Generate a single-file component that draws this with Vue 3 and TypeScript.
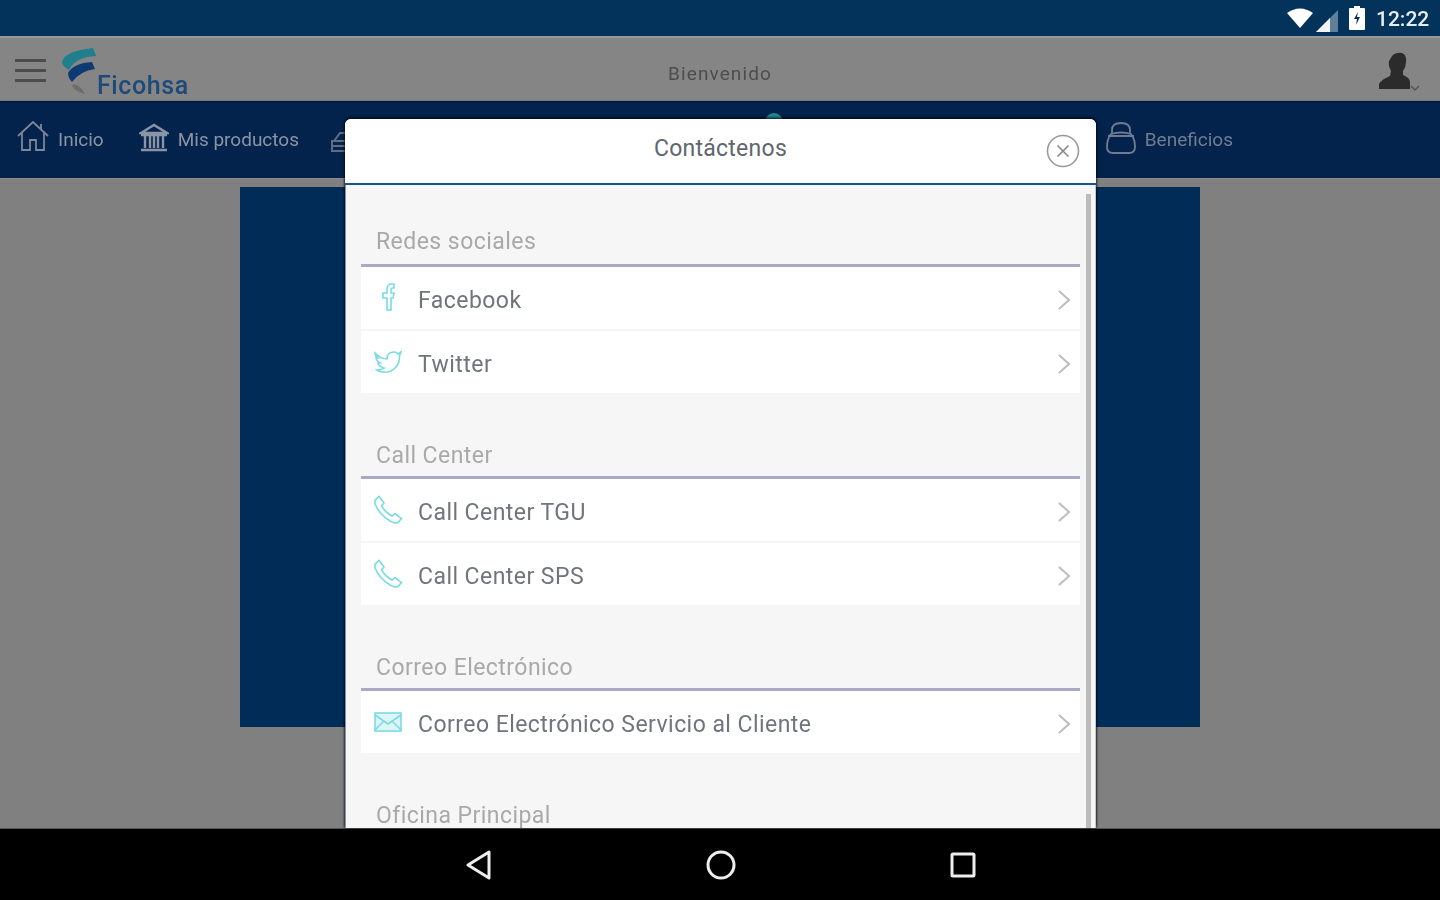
<script setup lang="ts">
interface ContactRow {
  label: string;
  icon: 'facebook' | 'twitter' | 'phone' | 'mail';
}

interface ContactSection {
  title: string;
  rows: ContactRow[];
}

const sections: ContactSection[] = [
  {
    title: 'Redes sociales',
    rows: [
      { label: 'Facebook', icon: 'facebook' },
      { label: 'Twitter', icon: 'twitter' },
    ],
  },
  {
    title: 'Call Center',
    rows: [
      { label: 'Call Center TGU', icon: 'phone' },
      { label: 'Call Center SPS', icon: 'phone' },
    ],
  },
  {
    title: 'Correo Electrónico',
    rows: [{ label: 'Correo Electrónico Servicio al Cliente', icon: 'mail' }],
  },
  { title: 'Oficina Principal', rows: [] },
];
</script>

<template>
  <div class="screen">
    <div class="status-bar">
      <svg class="wifi" width="26" height="20" viewBox="0 0 26 20"><path d="M0 5 Q13 -4 26 5 L13 20 Z" fill="#fff" /></svg>
      <svg class="signal" width="22" height="22" viewBox="0 0 22 22">
        <path d="M22 0 V22 H0 Z" fill="#5d7f9b" />
        <path d="M14 8 V22 H0 Z" fill="#f2f5f7" />
      </svg>
      <svg class="battery" width="16" height="24" viewBox="0 0 16 24">
        <path d="M5 0 H11 V2 H15 Q16 2 16 3 V23 Q16 24 15 24 H1 Q0 24 0 23 V3 Q0 2 1 2 H5 Z" fill="#fff" />
        <path d="M9 6 L5 13 H8 L7 19 L11 11 H8 Z" fill="#03335a" />
      </svg>
      <span class="clock">12:22</span>
    </div>

    <header class="app-header">
      <div class="burger"><i></i><i></i><i></i></div>
      <div class="logo">
        <svg width="40" height="48" viewBox="0 0 40 48">
          <path d="M1 14 Q3 3 32 0 L35 8 Q14 9 8 22 Q1 18 1 14 Z" fill="#1f7f8d" />
          <path d="M7 25 Q13 15 31 14 L34 21 Q19 23 11 34 Q7 30 7 25 Z" fill="#0e3a73" />
          <path d="M13 36 Q19 37 24 46 Q15 44 11 38 Z" fill="#6d6d6d" />
        </svg>
        <span class="logo-text">Ficohsa</span>
      </div>
      <div class="header-title">Bienvenido</div>
      <svg class="user" width="44" height="42" viewBox="0 0 44 42">
        <path d="M14 4 Q18 0 24 1 Q29 3 28 10 Q28 15 25 19 L25 23 Q32 26 32 30 V37 H1 V32 Q4 27 12 24 L13 19 Q10 13 11 9 Z" fill="#2b2b2b" />
        <path d="M33 34 L37 38 L41 34" fill="none" stroke="#555" stroke-width="1.5" />
      </svg>
    </header>

    <nav class="main-nav">
      <div class="nav-item inicio">
        <svg class="nav-icon home" width="32" height="32" viewBox="0 0 32 32" fill="none" stroke="#7b8699" stroke-width="1.8">
          <path d="M1 16 L16 2 L31 16 M5 13 V30 H13 V20 H19 V30 H27 V13 M24 4 V9" />
        </svg>
        <span>Inicio</span>
      </div>
      <div class="nav-item productos">
        <svg class="nav-icon" width="30" height="30" viewBox="0 0 30 30" fill="none" stroke="#8a94a5" stroke-width="2.4">
          <path d="M2 10 L15 2 L28 10 Z M2 12 H28 M6 13 V25 M11 13 V25 M15 13 V25 M19 13 V25 M24 13 V25 M2 27 H28" />
        </svg>
        <span>Mis productos</span>
      </div>
      <svg class="hidden-icon" width="22" height="22" viewBox="0 0 22 22" fill="none" stroke="#5f6d84" stroke-width="2">
        <path d="M3 10 L9 2 H18 M1 10 H21 V20 H1 Z M1 15 H21" />
      </svg>
      <div class="nav-item beneficios">
        <svg class="nav-icon" width="30" height="34" viewBox="0 0 30 34" fill="none" stroke="#6f7c92" stroke-width="1.8">
          <path d="M6 13 V9 Q6 2 15 2 Q24 2 24 9 V13 M2 15 H28 M5 13 Q1 18 1 26 Q1 32 7 32 H23 Q29 32 29 26 Q29 18 25 13 Q15 10 5 13 Z" />
        </svg>
        <span>Beneficios</span>
      </div>
    </nav>

    <main class="content">
      <div class="banner"></div>
    </main>

    <div class="android-nav">
      <svg width="26" height="30" viewBox="0 0 26 30" fill="none" stroke="#eee" stroke-width="3" stroke-linejoin="round"><path d="M23 2 V28 L2 15 Z" /></svg>
      <svg width="30" height="30" viewBox="0 0 30 30" fill="none" stroke="#eee" stroke-width="3"><circle cx="15" cy="15" r="13" /></svg>
      <svg width="26" height="26" viewBox="0 0 26 26" fill="none" stroke="#eee" stroke-width="3" stroke-linejoin="round"><rect x="2" y="2" width="22" height="22" rx="1" /></svg>
    </div>

    <div class="active-dot"></div>

    <section class="modal">
      <div class="modal-head">
        <h2>Contáctenos</h2>
        <svg class="close" width="34" height="34" viewBox="0 0 34 34" fill="none" stroke="#999" stroke-width="1.6">
          <circle cx="17" cy="17" r="15.5" />
          <path d="M11.5 11.5 L22.5 22.5 M22.5 11.5 L11.5 22.5" stroke="#888" />
        </svg>
      </div>
      <div class="modal-body">
        <div class="scrollbar"></div>
        <div v-for="section in sections" :key="section.title" class="group">
          <h3>{{ section.title }}</h3>
          <div v-if="section.rows.length" class="rows">
            <div v-for="row in section.rows" :key="row.label" class="row">
              <span class="row-icon" :class="row.icon">
                <svg v-if="row.icon === 'facebook'" width="16" height="28" viewBox="0 0 16 28" fill="none" stroke="#7adbe4" stroke-width="1.6">
                  <path d="M7 27 V15 H3 V10 H7 V6 Q7 1 12 1 H14 V5 H12 Q11 5 11 7 V10 H14 L13 15 H11 V27 Z" />
                </svg>
                <svg v-else-if="row.icon === 'twitter'" width="28" height="24" viewBox="0 0 28 24" fill="none" stroke="#7adbe4" stroke-width="1.6">
                  <path d="M1 3 Q7 9 13 9 Q13 2 20 2 Q23 2 24 4 L27 2 L25.5 6 Q26 16 17 21 Q9 24 3 20 Q7 20 10 18 Q4 16 4 13 L6 13 Q2 10 2 8 L4 8 Q1 6 1 3 Z" />
                </svg>
                <svg v-else-if="row.icon === 'phone'" width="30" height="30" viewBox="0 0 30 30" fill="none" stroke="#7adbe4" stroke-width="1.6">
                  <path d="M2 5 L6 1.5 L11 8 L8.5 11 Q12 17 19 21 L22 18.5 L28.5 23.5 L25 27.5 Q22 29 17 26 Q6 19 2 9 Z" />
                </svg>
                <svg v-else width="28" height="20" viewBox="0 0 28 20" fill="#dcf6f8" stroke="#7adbe4" stroke-width="1.6">
                  <rect x="1" y="1" width="26" height="18" />
                  <path d="M1 3 L14 12 L27 3 M1 18 L10 9 M27 18 L18 9" fill="none" />
                </svg>
              </span>
              <span class="row-label">{{ row.label }}</span>
              <svg class="chevron" width="14" height="22" viewBox="0 0 14 22" fill="none" stroke="#bdbdbd" stroke-width="2"><path d="M2 2 L12 11 L2 20" /></svg>
            </div>
          </div>
        </div>
      </div>
    </section>
  </div>
</template>

<style>
html,
body {
  margin: 0;
  background: #808080;
}
</style>

<style scoped>
.screen {
  position: relative;
  width: 1440px;
  height: 900px;
  display: flex;
  flex-direction: column;
  overflow: hidden;
  font-family: Roboto, 'Liberation Sans', sans-serif;
  filter: blur(0.5px);
}

.status-bar {
  height: 36px;
  flex: none;
  background: #03335a;
  display: flex;
  align-items: center;
  justify-content: flex-end;
  padding-right: 12px;
  box-sizing: border-box;
}

.wifi {
  margin-right: 3px;
}

.signal {
  margin-right: 11px;
  margin-top: 5px;
}

.battery {
  margin-right: 11px;
}

.clock {
  color: #e9edf1;
  font-size: 21px;
  font-weight: 500;
  line-height: 1;
  width: 52px;
  margin-top: 3px;
}

.app-header {
  position: relative;
  height: 65px;
  flex: none;
  box-sizing: border-box;
  background: #858585;
  border-top: 2px solid #999;
  border-bottom: 1px solid #777;
  display: flex;
  align-items: center;
  padding-left: 15px;
}

.burger {
  width: 31px;
  display: flex;
  flex-direction: column;
  gap: 7px;
  margin-right: 15px;
  margin-top: 2px;
}

.burger i {
  height: 3px;
  background: #4c4c4c;
}

.logo {
  display: flex;
  align-items: flex-end;
  height: 48px;
  margin-top: 6px;
}

.logo-text {
  color: #1d4a79;
  font-size: 25px;
  line-height: 26px;
  margin-left: -4px;
  margin-bottom: -3px;
  letter-spacing: 0.6px;
  font-weight: 500;
}

.header-title {
  position: absolute;
  left: 0;
  right: 0;
  top: 25px;
  text-align: center;
  color: #4d4d4d;
  font-size: 19px;
  line-height: 22px;
  letter-spacing: 1.1px;
}

.user {
  margin-left: auto;
  margin-right: 18px;
  margin-top: 8px;
}

.main-nav {
  position: relative;
  height: 77px;
  flex: none;
  background: #04234c;
  border-top: 2px solid #021a45;
  box-sizing: border-box;
  display: flex;
  align-items: center;
  padding-left: 17px;
  color: #8a94a5;
  font-size: 19px;
}

.nav-item {
  display: flex;
  align-items: center;
  gap: 9px;
  margin-top: -3px;
}

.nav-icon {
  margin-top: -2px;
}

.home {
  margin-top: -6px;
}

.productos {
  margin-left: 35px;
}

.hidden-icon {
  position: absolute;
  left: 331px;
  top: 28px;
}

.beneficios {
  margin-left: auto;
  margin-right: 207px;
  color: #6f7c92;
  gap: 9px;
}

.content {
  flex: 1;
  background: #808080;
  padding-top: 8px;
  display: flex;
  justify-content: center;
  border-top: 1px solid #8c8c8c;
  box-sizing: border-box;
}

.banner {
  width: 960px;
  height: 540px;
  background: #022c58;
}

.android-nav {
  height: 72px;
  flex: none;
  background: #000;
  border-top: 1px solid #555;
  box-sizing: border-box;
  display: flex;
  align-items: center;
  justify-content: center;
  gap: 214px;
  padding-left: 1px;
}

.active-dot {
  position: absolute;
  left: 765px;
  top: 113px;
  width: 18px;
  height: 10px;
  border-radius: 9px 9px 0 0;
  background: #1f8d97;
}

.modal {
  position: absolute;
  left: 345px;
  top: 119px;
  width: 751px;
  height: 709px;
  display: flex;
  flex-direction: column;
  border-radius: 6px 6px 0 0;
  overflow: hidden;
  background: #f6f6f6;
  box-shadow: 0 -2px 3px rgba(0, 0, 20, 0.55), -1px 0 2px rgba(0, 0, 20, 0.5), 1px 0 2px rgba(0, 0, 20, 0.5);
}

.modal-head {
  position: relative;
  height: 64px;
  flex: none;
  background: #fff;
  border-bottom: 2px solid #15568c;
  box-sizing: content-box;
  text-align: center;
}

.modal-head h2 {
  margin: 0;
  padding-top: 16px;
  font-size: 23px;
  line-height: 28px;
  font-weight: 400;
  color: #5f6670;
  letter-spacing: 0.25px;
}

.close {
  position: absolute;
  right: 16px;
  top: 15px;
}

.modal-body {
  position: relative;
  flex: 1;
  overflow: hidden;
  padding: 0 15px 0 15px;
  border-left: 1px solid #8f95a0;
  border-right: 1px solid #c8c8c8;
}

.scrollbar {
  position: absolute;
  right: 4px;
  top: 9px;
  bottom: 0;
  width: 5px;
  background: #bcbcbc;
}

.group h3 {
  margin: 0;
  height: 82px;
  box-sizing: border-box;
  padding: 43px 0 0 15px;
  border-bottom: 3px solid #a9a9c6;
  font-size: 23px;
  line-height: 28px;
  font-weight: 400;
  color: #a9a9a9;
  letter-spacing: 0.45px;
}

.group + .group h3 {
  height: 86px;
  padding-top: 49px;
}

.group:last-child h3 {
  border-bottom: 0;
}

.rows {
  display: flex;
  flex-direction: column;
  gap: 2px;
}

.row {
  height: 62px;
  background: #fff;
  display: flex;
  align-items: center;
  padding: 0 9px 0 12px;
  box-sizing: border-box;
}

.row-icon {
  width: 30px;
  display: flex;
  justify-content: center;
  margin-right: 15px;
}

.row-icon.facebook {
  margin-top: -3px;
}

.row-icon.phone {
  margin-top: -1px;
}

.row-icon.mail {
  margin-top: -1px;
}

.row-label {
  flex: 1;
  padding-top: 5px;
  font-size: 23px;
  line-height: 28px;
  color: #70757c;
  letter-spacing: 0.45px;
}

.chevron {
  margin-top: 4px;
}
</style>
